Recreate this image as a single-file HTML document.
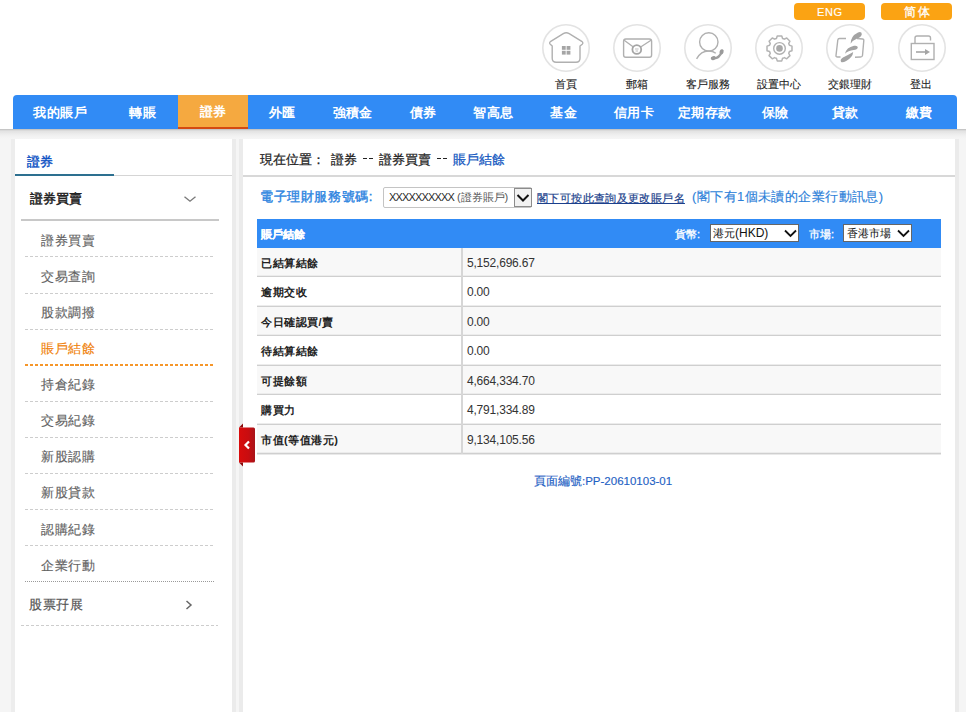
<!DOCTYPE html>
<html><head><meta charset="utf-8">
<style>
*{margin:0;padding:0;box-sizing:border-box}
html,body{width:966px;height:712px;overflow:hidden;background:#f5f5f5;font-family:"Liberation Sans",sans-serif;color:#333}
.abs{position:absolute}
#top{position:absolute;left:0;top:0;width:966px;height:129px;background:#fff}
.lang{position:absolute;top:3px;height:17px;width:71px;background:#fba313;border-radius:4px;color:#fff;font-size:11px;text-align:center;line-height:19px;-webkit-text-stroke:0.15px #fff}
.ico{position:absolute;top:24px}
.lbl{position:absolute;top:77px;width:80px;text-align:center;font-size:11px;color:#222;line-height:14px;-webkit-text-stroke:0.1px #222}
#nav{position:absolute;left:13px;top:95px;width:944px;height:34px;background:#318bf5;border-radius:4px 4px 0 0}
.ni{position:absolute;top:0;height:34px;line-height:36px;text-align:center;color:#fff;font-weight:bold;font-size:13px;letter-spacing:0.35px;text-indent:0.35px}
.ni.act{background:#f5a940;border-bottom:2px solid #d44a12;line-height:34px}
#shadow{position:absolute;left:0;top:129px;width:966px;height:10px;background:linear-gradient(#c6c6c6 0px,#c6c6c6 1px,#dadada 1px,#dadada 2px,#e4e4e4 2px,#e4e4e4 3px,#e9e9e9 4px,#efefef 6px,#f3f3f3 8px,#f5f5f5 10px)}
#lp{position:absolute;left:11px;top:139px;width:225px;height:600px;background:#fff;border-left:4px solid #ededed;border-right:4px solid #ebebeb}
#rp{position:absolute;left:239px;top:139px;width:720px;height:600px;background:#fff;border-left:4px solid #ebebeb;border-right:4px solid #ebebeb}
.li{position:absolute;left:41px;font-size:13px;letter-spacing:0.5px;color:#636363;-webkit-text-stroke:0.15px currentColor;line-height:14px}
.dash{position:absolute;left:25px;width:190px;height:1px;background:repeating-linear-gradient(90deg,#cdcdcd 0 3px,transparent 3px 5px)}
.bc{position:absolute;top:152px;font-size:13px;color:#222;line-height:16px;white-space:nowrap;-webkit-text-stroke:0.25px currentColor}
.dd{font-size:12px;margin-top:-3px;color:#444}
.hl{position:absolute;left:257px;width:684px;height:1px;background:#cfcfcf;box-shadow:0 1px 0 #e9e9e9,0 -1px 0 #ececec}
.c1{position:absolute;left:261px;font-size:11px;letter-spacing:0.5px;font-weight:bold;color:#222;line-height:14px;white-space:nowrap}
.c2{position:absolute;left:467px;font-size:12px;letter-spacing:-0.2px;color:#333;line-height:14px}
</style></head><body>
<div id="top">
  <div class="lang" style="left:794px;letter-spacing:0.6px;text-indent:0.6px">ENG</div>
  <div class="lang" style="left:881px;font-size:12px;letter-spacing:2px;text-indent:2px;-webkit-text-stroke:0.3px #fff">简体</div>
  <svg class="ico" style="left:542px" width="48" height="48"><circle cx="24" cy="24" r="23.2" fill="none" stroke="#e3e3e3" stroke-width="1.6"/><path d="M10.2 22 L8.3 20.3 Q6.8 18.8 8.8 17.3 L21.3 9.6 Q24.2 7.8 27.2 9.6 L39.7 17.3 Q41.7 18.8 40.2 20.3 L38 22 L38 34.3 Q38 38.3 34 38.3 L14.2 38.3 Q10.2 38.3 10.2 34.3 Z" fill="none" stroke="#b0b0b0" stroke-width="1.4"/><g fill="#a5a5a5"><rect x="19.9" y="22" width="3.8" height="3.8"/><rect x="24.6" y="22" width="3.8" height="3.8"/><rect x="19.9" y="26.8" width="3.8" height="3.8"/><rect x="24.6" y="26.8" width="3.8" height="3.8"/></g></svg>
  <svg class="ico" style="left:613px" width="48" height="48"><circle cx="24" cy="24" r="23.2" fill="none" stroke="#e3e3e3" stroke-width="1.6"/><rect x="10.6" y="15" width="28" height="18.3" rx="2.2" fill="none" stroke="#b0b0b0" stroke-width="1.4"/><path d="M10.8 16 L23.8 25.5 L38.4 16" fill="none" stroke="#b0b0b0" stroke-width="1.4"/><circle cx="23.8" cy="25.5" r="4.4" fill="#fff" stroke="#a5a5a5" stroke-width="1.8"/><path d="M22 25 H25.6 M22.6 27 H25" stroke="#b5b5b5" stroke-width="0.9"/></svg>
  <svg class="ico" style="left:684px" width="48" height="48"><circle cx="24" cy="24" r="23.2" fill="none" stroke="#e3e3e3" stroke-width="1.6"/><circle cx="24.8" cy="17.9" r="9.2" fill="none" stroke="#b0b0b0" stroke-width="1.4"/><path d="M12.6 34.8 Q17 27 24.5 27 Q29 27 31.8 29.2" fill="none" stroke="#b0b0b0" stroke-width="1.4"/><path d="M28.8 34.2 Q35 35.2 37.8 27.5" fill="none" stroke="#9e9e9e" stroke-width="2.2" stroke-linecap="round"/><ellipse cx="29.3" cy="34.1" rx="2.6" ry="2" fill="#9a9a9a" transform="rotate(-15 29.3 34.1)"/><ellipse cx="37.6" cy="27.8" rx="2" ry="2.6" fill="#9a9a9a" transform="rotate(20 37.6 27.8)"/></svg>
  <svg class="ico" style="left:755px" width="48" height="48"><circle cx="24" cy="24" r="23.2" fill="none" stroke="#e3e3e3" stroke-width="1.6"/><path d="M21.43 14.46 L22.23 11.91 L26.77 11.91 L27.57 14.46 A10.4 10.4 0 0 1 29.35 15.20 L29.35 15.20 L31.73 13.96 L34.94 17.17 L33.70 19.55 A10.4 10.4 0 0 1 34.44 21.33 L34.44 21.33 L36.99 22.13 L36.99 26.67 L34.44 27.47 A10.4 10.4 0 0 1 33.70 29.25 L33.70 29.25 L34.94 31.63 L31.73 34.84 L29.35 33.60 A10.4 10.4 0 0 1 27.57 34.34 L27.57 34.34 L26.77 36.89 L22.23 36.89 L21.43 34.34 A10.4 10.4 0 0 1 19.65 33.60 L19.65 33.60 L17.27 34.84 L14.06 31.63 L15.30 29.25 A10.4 10.4 0 0 1 14.56 27.47 L14.56 27.47 L12.01 26.67 L12.01 22.13 L14.56 21.33 A10.4 10.4 0 0 1 15.30 19.55 L15.30 19.55 L14.06 17.17 L17.27 13.96 L19.65 15.20 A10.4 10.4 0 0 1 21.43 14.46 Z" fill="none" stroke="#b4b4b4" stroke-width="1.5" stroke-linejoin="round"/><circle cx="24.5" cy="24.4" r="5.8" fill="none" stroke="#b0b0b0" stroke-width="1.4"/><circle cx="24.5" cy="24.4" r="3.3" fill="#a8a8a8"/></svg>
  <svg class="ico" style="left:826px" width="48" height="48"><circle cx="24" cy="24" r="23.2" fill="none" stroke="#e3e3e3" stroke-width="1.6"/><path d="M20 14.5 L13.5 14.5 Q12 14.5 11.8 16 L10 31.5 Q9.8 33 11.5 33 L14.5 33" fill="none" stroke="#b0b0b0" stroke-width="1.4"/><path d="M31 14.5 L36.5 15 Q38 15.2 37.8 16.5 L36.5 31.5 Q36.3 33 34.5 33 L29 33.2" fill="none" stroke="#b0b0b0" stroke-width="1.4"/><g fill="#a3a3a3"><path d="M24.6 19.8 Q24.5 12 32 8.4 Q35.8 7.2 35.8 10.3 Q35.4 13 31.2 14.6 Q27 16.2 24.6 19.8 Z"/><path d="M19 29.8 Q20.3 23.5 28 21.8 Q31.8 21.2 31.8 23.5 Q31.4 25.6 27.6 26.1 Q22.2 26.6 19 29.8 Z"/><path d="M15 37.8 Q13.8 35.6 17 33.5 Q22 30.8 24.6 29.4 L27.2 28 Q26.8 33.2 20.2 37 Q16.2 39.2 15 37.8 Z"/></g></svg>
  <svg class="ico" style="left:898px" width="48" height="48"><circle cx="24" cy="24" r="23.2" fill="none" stroke="#e3e3e3" stroke-width="1.6"/><rect x="13.3" y="19.5" width="22.7" height="16" fill="none" stroke="#b0b0b0" stroke-width="1.4"/><path d="M17 19.5 L17 14 Q17 12 19 12 L30.5 12 Q32.5 12 32.5 14 L32.5 16.5" fill="none" stroke="#b0b0b0" stroke-width="1.4"/><path d="M18 28 H28.5" stroke="#a5a5a5" stroke-width="1.6"/><path d="M27 25 L32 28 L27 31 Z" fill="#a5a5a5"/></svg>

  <div class="lbl" style="left:526px">首頁</div>
  <div class="lbl" style="left:597px">郵箱</div>
  <div class="lbl" style="left:668px">客戶服務</div>
  <div class="lbl" style="left:739px">設置中心</div>
  <div class="lbl" style="left:810px">交銀理財</div>
  <div class="lbl" style="left:881px">登出</div>
</div>
<div id="nav">
  <div class="ni" style="left:0;width:94px">我的賬戶</div>
  <div class="ni" style="left:94px;width:71px">轉賬</div>
  <div class="ni act" style="left:165px;width:70px">證券</div>
  <div class="ni" style="left:233.8px;width:70.4px">外匯</div>
  <div class="ni" style="left:304.2px;width:70.4px">強積金</div>
  <div class="ni" style="left:374.6px;width:70.4px">債券</div>
  <div class="ni" style="left:445px;width:70.4px">智高息</div>
  <div class="ni" style="left:515.4px;width:70.4px">基金</div>
  <div class="ni" style="left:585.8px;width:70.4px">信用卡</div>
  <div class="ni" style="left:656.2px;width:70.4px">定期存款</div>
  <div class="ni" style="left:726.6px;width:70.4px">保險</div>
  <div class="ni" style="left:797px;width:70.4px">貸款</div>
  <div class="ni" style="left:868.6px;width:75.4px">繳費</div>
</div>
<div id="shadow"></div>
<div id="lp"></div>
<div class="abs" style="left:27px;top:153.5px;font-size:13px;color:#0d52c4;-webkit-text-stroke:0.4px #0d52c4;line-height:16px">證券</div>
<div class="abs" style="left:15px;top:175px;width:217px;height:1px;background:#d5d5d5"></div>
<div class="abs" style="left:15px;top:174px;width:99px;height:2px;background:#2d7090"></div>
<div class="abs" style="left:30px;top:191px;font-size:13px;color:#222;-webkit-text-stroke:0.45px #222;line-height:16px">證券買賣</div>
<svg class="abs" style="left:183px;top:195px" width="14" height="8"><path d="M1.5 1.8 L7 6.2 L12.5 1.8" fill="none" stroke="#7a7a7a" stroke-width="1.4"/></svg>
<div class="abs" style="left:21px;top:219px;width:198px;height:2px;background:#c8c8c8"></div>
<div class="li" style="top:234px">證券買賣</div>
<div class="dash" style="top:256px"></div>
<div class="li" style="top:270px">交易查詢</div>
<div class="dash" style="top:293px"></div>
<div class="li" style="top:306px">股款調撥</div>
<div class="dash" style="top:329px"></div>
<div class="li" style="top:342px;color:#f07f09">賬戶結餘</div>
<div class="dash" style="top:364px;height:2px;background:repeating-linear-gradient(90deg,#f5962a 0 3.5px,transparent 3.5px 5px)"></div>
<div class="li" style="top:378px">持倉紀錄</div>
<div class="dash" style="top:401px"></div>
<div class="li" style="top:414px">交易紀錄</div>
<div class="dash" style="top:437px"></div>
<div class="li" style="top:450px">新股認購</div>
<div class="dash" style="top:473px"></div>
<div class="li" style="top:486px">新股貸款</div>
<div class="dash" style="top:509px"></div>
<div class="li" style="top:523px">認購紀錄</div>
<div class="dash" style="top:545px"></div>
<div class="li" style="top:559px">企業行動</div>
<div class="dash" style="top:581px;background:repeating-linear-gradient(90deg,#9a9a9a 0 1px,transparent 1px 2px)"></div>
<div class="abs" style="left:29px;top:598px;font-size:13px;letter-spacing:0.5px;color:#555;-webkit-text-stroke:0.2px #555;line-height:14px">股票孖展</div>
<svg class="abs" style="left:185px;top:600px" width="8" height="10"><path d="M1.5 1 L6 5 L1.5 9" fill="none" stroke="#666" stroke-width="1.5"/></svg>
<div class="dash" style="top:625px;left:21px;width:197px"></div>
<div id="rp"></div>
<div class="bc" style="left:260px">現在位置：</div><div class="bc" style="left:330.5px">證券</div><div class="abs" style="left:363px;top:158px;width:4px;height:1px;background:#222"></div><div class="abs" style="left:369px;top:158px;width:4px;height:1px;background:#222"></div><div class="bc" style="left:378.5px">證券買賣</div><div class="abs" style="left:437px;top:158px;width:4px;height:1px;background:#222"></div><div class="abs" style="left:443px;top:158px;width:4px;height:1px;background:#222"></div><div class="bc" style="left:452.5px;color:#1256c0">賬戶結餘</div>
<div class="abs" style="left:243px;top:175px;width:712px;height:2px;background:#d8d8d8"></div>
<div class="abs" style="left:260px;top:189px;font-size:13px;letter-spacing:0.6px;color:#2d84df;-webkit-text-stroke:0.4px #2d84df;line-height:16px;white-space:nowrap">電子理財服務號碼:</div>
<div class="abs" style="left:383px;top:187px;width:149px;height:21px;border:1px solid #c4c4c4;border-radius:2px;background:#fff;font-size:11px;color:#2a2a2a;line-height:19px;padding-left:5px;white-space:nowrap;overflow:hidden"><span style="letter-spacing:-0.85px">XXXXXXXXXX</span> <span style="color:#555">(證券賬戶)</span></div>
<div class="abs" style="left:514px;top:188px;width:18px;height:19px;border:1px solid #8c8c8c;background:#f2f2f2"><svg width="16" height="17" style="position:absolute;left:0;top:0"><path d="M2.5 6 L8 11.5 L13.5 6" fill="none" stroke="#111" stroke-width="2"/></svg></div>
<div class="abs" style="left:537px;top:191px;font-size:11px;letter-spacing:0.38px;color:#1b3f8c;-webkit-text-stroke:0.2px #1b3f8c;line-height:14px;text-decoration:underline;white-space:nowrap">閣下可按此查詢及更改賬戶名</div>
<div class="abs" style="left:692px;top:189px;font-size:13px;letter-spacing:0.42px;color:#2d7fd9;-webkit-text-stroke:0.15px #2d7fd9;line-height:16px;white-space:nowrap">(閣下有1個未讀的企業行動訊息)</div>
<div class="abs" style="left:257px;top:219px;width:684px;height:29px;background:#318bf5"></div>
<div class="abs" style="left:261px;top:227px;font-size:11px;font-weight:bold;color:#fff;line-height:14px;-webkit-text-stroke:0.2px #fff">賬戶結餘</div>
<div class="abs" style="left:675px;top:227px;font-size:11px;color:#fff;line-height:14px;-webkit-text-stroke:0.3px #fff">貨幣:</div>
<div class="abs" style="left:710px;top:224px;width:89px;height:18px;border:1px solid #666;background:#fff;font-size:12px;color:#111;line-height:17px;padding-left:2px"><span style="font-size:11px">港元</span>(HKD)<svg style="position:absolute;right:1px;top:4px" width="13" height="9"><path d="M1 1.5 L6.5 7 L12 1.5" fill="none" stroke="#111" stroke-width="1.8"/></svg></div>
<div class="abs" style="left:809px;top:227px;font-size:11px;color:#fff;line-height:14px;-webkit-text-stroke:0.3px #fff">市場:</div>
<div class="abs" style="left:843px;top:224px;width:69px;height:18px;border:1px solid #666;background:#fff;font-size:11px;color:#111;line-height:17px;padding-left:3px;white-space:nowrap">香港市場<svg style="position:absolute;right:1px;top:4px" width="13" height="9"><path d="M1 1.5 L6.5 7 L12 1.5" fill="none" stroke="#111" stroke-width="1.8"/></svg></div>
<div class="abs" style="left:257px;top:248px;width:684px;height:28px;background:#f8f8f8"></div>
<div class="hl" style="top:276px"></div>
<div class="c1" style="top:256px">已結算結餘</div><div class="c2" style="top:256px">5,152,696.67</div>
<div class="abs" style="left:257px;top:277px;width:684px;height:29px;background:#fff"></div>
<div class="hl" style="top:306px"></div>
<div class="c1" style="top:285px">逾期交收</div><div class="c2" style="top:285px">0.00</div>
<div class="abs" style="left:257px;top:307px;width:684px;height:28px;background:#f8f8f8"></div>
<div class="hl" style="top:335px"></div>
<div class="c1" style="top:315px">今日確認買/賣</div><div class="c2" style="top:315px">0.00</div>
<div class="abs" style="left:257px;top:336px;width:684px;height:29px;background:#fff"></div>
<div class="hl" style="top:365px"></div>
<div class="c1" style="top:344px">待結算結餘</div><div class="c2" style="top:344px">0.00</div>
<div class="abs" style="left:257px;top:366px;width:684px;height:28px;background:#f8f8f8"></div>
<div class="hl" style="top:394px"></div>
<div class="c1" style="top:374px">可提餘額</div><div class="c2" style="top:374px">4,664,334.70</div>
<div class="abs" style="left:257px;top:395px;width:684px;height:29px;background:#fff"></div>
<div class="hl" style="top:424px"></div>
<div class="c1" style="top:403px">購買力</div><div class="c2" style="top:403px">4,791,334.89</div>
<div class="abs" style="left:257px;top:425px;width:684px;height:28px;background:#f8f8f8"></div>
<div class="hl" style="top:453px"></div>
<div class="c1" style="top:433px">市值(等值港元)</div><div class="c2" style="top:433px">9,134,105.56</div>
<div class="abs" style="left:461px;top:248px;width:2px;height:206px;background:#d6d6d6"></div>
<div class="abs" style="left:534px;top:473.5px;font-size:12px;color:#1f62c4;-webkit-text-stroke:0.15px #1f62c4;line-height:14px;white-space:nowrap">頁面編號<span style="font-size:11.5px">:PP-20610103-01</span></div>
<svg class="abs" style="left:238px;top:423px" width="18" height="44"><path d="M1 4.5 L5 0.5 L5 4.5 Z M1 39.5 L5 43.5 L5 39.5 Z" fill="#8a0a0a"/><defs><linearGradient id="rg" x1="0" x2="1"><stop offset="0" stop-color="#d80c0c"/><stop offset="0.6" stop-color="#c80d10"/><stop offset="1" stop-color="#a8141a"/></linearGradient></defs><path d="M1 4.5 L15.5 4.5 Q17 4.5 17 6 L17 38 Q17 39.5 15.5 39.5 L1 39.5 Z" fill="url(#rg)"/><path d="M11 18.5 L7.5 22 L11 25.5" fill="none" stroke="#fff" stroke-width="2.2"/></svg>
</body></html>
